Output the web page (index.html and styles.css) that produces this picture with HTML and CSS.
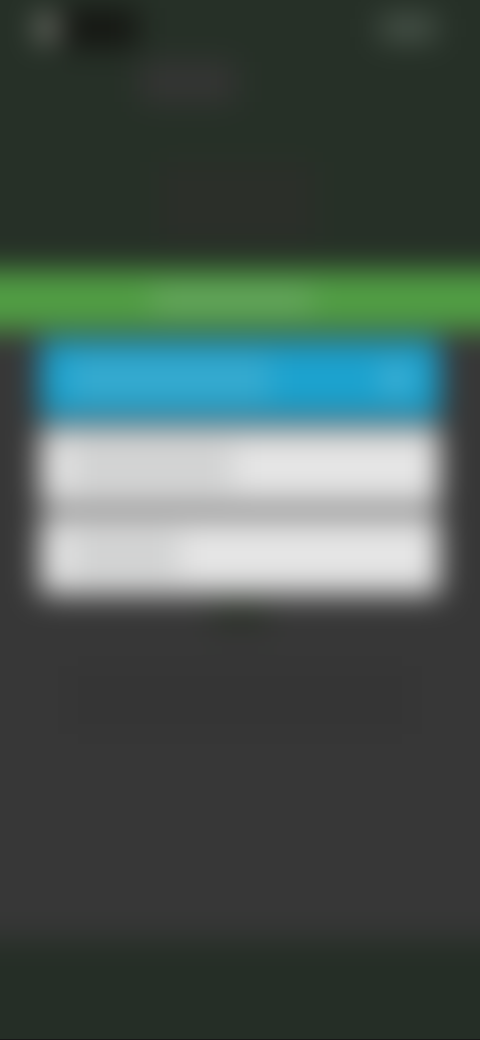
FILE: index.html
```
<!DOCTYPE html>
<html lang="en">
<head>
  <meta charset="UTF-8" />
  <meta name="viewport" content="width=device-width, initial-scale=1.0" />
  <title>Options</title>
  <link rel="stylesheet" href="styles.css">
</head>
<body>
  <div class="screen">
    <div class="page">
      <header class="header">
        <div class="status-bar">
          <span class="dot"></span>
          <span class="pill"></span>
          <span class="status-icons"></span>
        </div>
        <div class="title"></div>
        <div class="subtitle"></div>
      </header>

      <div class="banner"><span class="line line-banner"></span></div>

      <main class="content">
        <div class="options">
          <button class="option selected" aria-label="Option 1">
            <span class="line line-long"></span>
            <svg class="check" viewBox="0 0 28 28" aria-hidden="true"><circle cx="14" cy="14" r="14" /></svg>
          </button>
          <button class="option" aria-label="Option 2"><span class="line line-medium"></span></button>
          <button class="option" aria-label="Option 3"><span class="line line-short"></span></button>
        </div>
        <div class="more"></div>
        <div class="note"></div>
      </main>

      <footer class="footer"></footer>
    </div>
  </div>
</body>
</html>
```

FILE: styles.css
```
* {
  box-sizing: border-box;
}
body {
  margin: 0;
  background: #373737;
  font-family: "Liberation Sans", Arial, sans-serif;
}
.screen {
  height: 100vh;
  overflow: hidden;
  display: flex;
  border-bottom: 1px solid #181818;
}
/* runs past the screen edges so the blur does not fade there */
.page {
  flex: 1;
  margin: -48px;
  display: flex;
  flex-direction: column;
  background: #373737;
  filter: blur(15px);
}
.header {
  height: 318px;
  flex-shrink: 0;
  padding: 56px 92px 0 86px;
  background: #263027;
}
.status-bar {
  display: flex;
  align-items: center;
  height: 40px;
}
.dot {
  width: 20px;
  height: 28px;
  border-radius: 50%;
  background: #94948c;
}
.pill {
  width: 80px;
  height: 40px;
  background: #151713;
}
.status-icons {
  width: 56px;
  height: 24px;
  margin-left: auto;
  background: #4b574d;
}
.title {
  width: 96px;
  height: 40px;
  margin: 14px 0 0 102px;
  background: #353534;
}
.subtitle {
  width: 156px;
  height: 80px;
  margin: 60px auto 0;
  background: #2b2f29;
}
.banner {
  height: 60px;
  flex-shrink: 0;
  display: flex;
  align-items: center;
  justify-content: center;
  background: #519e44;
}
.line {
  height: 28px;
}
.line-banner {
  width: 160px;
  height: 20px;
  margin-right: 16px;
  background: #6ca967;
}
.content {
  flex: 1;
  padding: 10px 88px 0;
}
.options {
  display: flex;
  flex-direction: column;
  gap: 10px;
}
.option {
  height: 78px;
  padding: 0 30px;
  border: none;
  border-radius: 4px;
  display: flex;
  align-items: center;
  justify-content: space-between;
  background: #e5e5e5;
  cursor: pointer;
}
.option .line {
  height: 44px;
  background: #d0d1d1;
}
.option.selected {
  background: #1ca2ce;
}
.option.selected .line {
  background: #37aacf;
}
.line-long {
  width: 200px;
}
.line-medium {
  width: 164px;
}
.line-short {
  width: 110px;
}
.check {
  width: 28px;
  height: 28px;
  fill: #50b5d6;
}
.more {
  width: 56px;
  height: 24px;
  margin: 8px auto 0;
  background: #2a3127;
}
.note {
  height: 68px;
  margin: 40px 28px 0;
  background: #353535;
}
.footer {
  height: 148px;
  flex-shrink: 0;
  background: #252e26;
}
```
